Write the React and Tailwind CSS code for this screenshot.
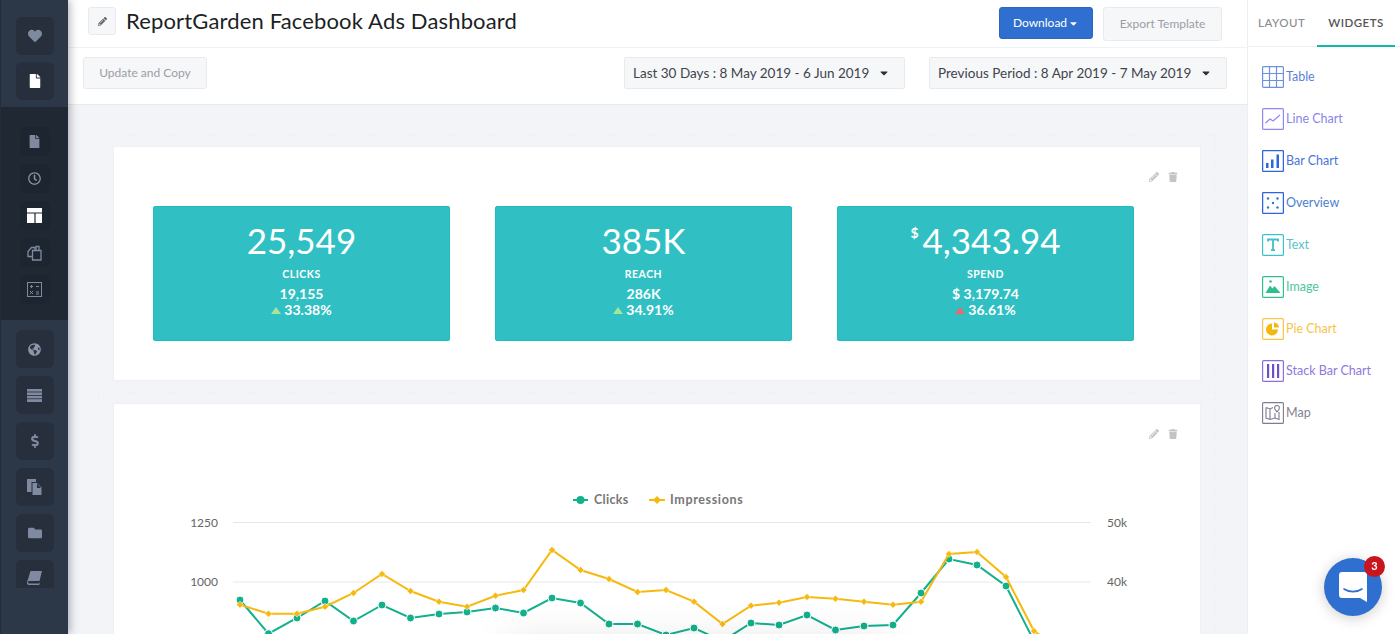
import React from 'react';
import {
  FaHeart, FaFile, FaGlobeAmericas, FaDollarSign,
  FaFolder, FaPencilAlt, FaTrash, FaCaretDown, FaRegClock,
} from 'react-icons/fa';

const FileStack = () => (
  <svg width="15" height="16" viewBox="0 0 15 16" fill="#7f8aa0">
    <path d="M0 0h9v3H4.5v10H0z" />
    <path d="M5.5 4H10l4.5 4.5V16h-9z" />
    <path d="M10 4.6V9h4z" fill="#262f3b" />
  </svg>
);

const ListIcon = () => (
  <svg width="15" height="13" viewBox="0 0 15 13" fill="#7f8aa0">
    <rect width="15" height="2.6" />
    <rect y="3.4" width="15" height="2.6" />
    <rect y="6.8" width="15" height="2.6" />
    <rect y="10.2" width="15" height="2.8" />
  </svg>
);

const BookIcon = () => (
  <svg width="15" height="14" viewBox="0 0 15 14" fill="#7f8aa0">
    <path d="M3.5 0H15l-2.5 10H2.2a1.2 1.2 0 0 0 0 2.4H12l.4-1 .5.4-.7 2.2H2A2 2 0 0 1 .1 11.2z" />
  </svg>
);

const CopyIcon = () => (
  <svg width="15" height="16" viewBox="0 0 15 16" fill="none" stroke="#7f8aa0" strokeWidth="1.3">
    <path d="M5.5 11.5H1V6.5L4.5 2.5h3.5v3" />
    <path d="M5.5 5.5h4l4.500 0v9.500H5.500z" />
    <path d="M9 5.500V1.500h3v4" />
  </svg>
);

const CalcIcon = () => (
  <svg width="15" height="15" viewBox="0 0 15 15" fill="none" stroke="#7f8aa0">
    <rect x="0.5" y="0.5" width="14" height="14" />
    <path d="M3 4.500h3M4.500 3v3M9 4.500h3M3 9l3 3M6 9l-3 3M9 10h3M9 12h3" />
  </svg>
);

const LayoutIcon = () => (
  <svg width="15" height="15" viewBox="0 0 15 15">
    <rect width="15" height="15" fill="#fff" />
    <path d="M0 5h15M8 5v10" stroke="#1f2833" strokeWidth="1.2" />
  </svg>
);

const SideButton = ({ children, small, className = '' }) => (
  <div className={`flex items-center justify-center rounded-md ${small ? 'w-[30px] h-[29px] bg-[#1c2530]' : 'w-[38px] h-[38px] bg-[#262f3b]'} ${className}`}>
    {children}
  </div>
);

const Sidebar = () => (
  <aside className="w-[68px] h-full shrink-0 flex flex-col bg-[#2c3747] border-l border-[#232c38] shadow-[2px_0_8px_rgba(30,40,55,0.35)] z-10">
    <div className="h-[107px] pt-[17px] flex flex-col items-center gap-[7px] shrink-0">
      <SideButton><FaHeart size={14} color="#7f8aa0" /></SideButton>
      <SideButton><FaFile size={14} color="#fff" /></SideButton>
    </div>
    <div className="h-[213px] pt-[20px] flex flex-col items-center gap-[8px] shrink-0 bg-[#1f2833]">
      <SideButton small><FaFile size={13} color="#7f8aa0" /></SideButton>
      <SideButton small><FaRegClock size={13} color="#8d97aa" /></SideButton>
      <SideButton small><LayoutIcon /></SideButton>
      <SideButton small><CopyIcon /></SideButton>
      <SideButton small><CalcIcon /></SideButton>
    </div>
    <div className="pt-[10px] flex flex-col items-center gap-[8px]">
      <SideButton><FaGlobeAmericas size={13} color="#8d97aa" /></SideButton>
      <SideButton><ListIcon /></SideButton>
      <SideButton><FaDollarSign size={14} color="#7f8aa0" /></SideButton>
      <SideButton><FileStack /></SideButton>
      <SideButton><FaFolder size={14} color="#7f8aa0" /></SideButton>
      <SideButton className="!h-[28px] rounded-b-none pt-[8px]"><BookIcon /></SideButton>
    </div>
  </aside>
);

const GhostButton = ({ children, className = '' }) => (
  <div className={`flex items-center justify-center rounded-[3px] bg-[#f6f7f9] border border-[#e9eaee] text-[12px] text-[#9a9ea6] ${className}`}>
    {children}
  </div>
);

const DateSelect = ({ label, className = '' }) => (
  <div className={`flex items-center justify-between h-[32px] rounded-[2px] bg-[#f6f7f9] border border-[#e9eaee] pl-[8px] pr-[14px] text-[13.5px] text-[#3f444c] ${className}`}>
    <span>{label}</span>
    <FaCaretDown size={12} color="#2b2f36" />
  </div>
);

const Header = () => (
  <div className="shrink-0 bg-white">
    <div className="h-[48px] flex items-start pl-[20px] pr-[25px] pt-[7px] border-b border-[#f1f2f5]">
      <GhostButton className="w-[28px] h-[28px]"><FaPencilAlt size={9} color="#666" /></GhostButton>
      <h1 className="ml-[10px] text-[22px] leading-[28px] tracking-[0.15px] text-[#1c1f24] font-normal">ReportGarden Facebook Ads Dashboard</h1>
      <div className="ml-auto flex gap-[10px]">
        <div className="w-[94px] h-[32px] flex items-center justify-center gap-[1px] rounded-[3px] bg-[#2f6fcf] border border-[#2a66c2] text-[12px] text-white">
          Download <FaCaretDown size={11} />
        </div>
        <GhostButton className="w-[119px] h-[34px]">Export Template</GhostButton>
      </div>
    </div>
    <div className="h-[57px] flex items-start pl-[15px] pr-[20px] pt-[9px] border-b border-[#e8e9ee]">
      <GhostButton className="w-[124px] h-[32px]">Update and Copy</GhostButton>
      <DateSelect label="Last 30 Days : 8 May 2019 - 6 Jun 2019" className="ml-auto w-[281px]" />
      <DateSelect label="Previous Period : 8 Apr 2019 - 7 May 2019" className="ml-[24px] w-[298px]" />
    </div>
  </div>
);

const metrics = [
  { value: '25,549', label: 'CLICKS', prev: '19,155', change: '33.38%', up: true },
  { value: '385K', label: 'REACH', prev: '286K', change: '34.91%', up: true },
  { value: '4,343.94', unit: '$', label: 'SPEND', prev: '$ 3,179.74', change: '36.61%', up: false },
];

const MetricCard = ({ value, unit, label, prev, change, up }) => (
  <div className="w-[297px] h-[135px] rounded-[2px] bg-[#30c0c4] border border-[#20bcc0] flex flex-col items-center text-white pt-[12px]">
    <div className="flex items-start leading-[42px] text-[35px]">
      {unit && <span className="text-[14px] font-bold leading-[28px] mr-[4px]">{unit}</span>}
      {value}
    </div>
    <div className="mt-[6px] text-[10.5px] leading-[14px] font-bold tracking-[0.5px]">{label}</div>
    <div className="mt-[5px] text-[14px] leading-[16px] font-bold">{prev}</div>
    <div className="flex items-center gap-[3px] text-[14px] leading-[16px] font-bold">
      <span className={`w-0 h-0 border-l-[5px] border-r-[5px] border-b-[7px] border-l-transparent border-r-transparent ${up ? 'border-b-[#a5e59b]' : 'border-b-[#ec6a6e]'}`} />
      {change}
    </div>
  </div>
);

const CardActions = () => (
  <div className="absolute top-[25px] right-[22px] flex items-center gap-[9px] text-[#c4c4c4]">
    <FaPencilAlt size={10} />
    <FaTrash size={10} />
  </div>
);

const xs = [239, 267.5, 296, 324, 352.5, 381, 409.5, 438, 466, 494.5, 522.5, 551, 579.5, 608, 636.5, 665, 693, 721.5, 750, 778, 806, 834.5, 863, 892, 920, 948, 976, 1005, 1033, 1062];
const clicks = [599, 632.7, 617, 600, 620, 604, 617, 613, 611, 607, 612, 597, 602, 623, 623, 634, 627, 640, 622, 624, 614, 629, 625, 624, 592, 558, 564, 585, 640, 660];
const impressions = [603.7, 612.7, 612.7, 605.7, 592, 573, 590, 600.7, 605.7, 594.7, 589, 549, 569, 578, 591, 589, 600.7, 623, 604.7, 601.7, 596, 597.7, 600.7, 603.7, 600.7, 553, 551, 576, 630, 650];

const toPoints = (ys) => ys.map((y, i) => `${xs[i]},${y}`).join(' ');

const Chart = () => (
  <svg viewBox="113 403 1087 231" className="block w-[1087px] h-[231px]">
    <g fontFamily="Lato, sans-serif" fontSize="12" fill="#666">
      <text x="217" y="526" textAnchor="end">1250</text>
      <text x="217" y="585" textAnchor="end">1000</text>
      <text x="1106" y="526">50k</text>
      <text x="1106" y="585">40k</text>
    </g>
    <path d="M232 521.5H1090" stroke="#e6e6e6" />
    <path d="M232 581H1090" stroke="#f0f0f0" strokeWidth="1.5" />
    <polyline points={toPoints(clicks)} fill="none" stroke="#12b08d" strokeWidth="2" />
    {clicks.map((y, i) => (
      <circle key={i} cx={xs[i]} cy={y} r="4" fill="#12b08d" stroke="#fff" strokeWidth="1" />
    ))}
    <polyline points={toPoints(impressions)} fill="none" stroke="#f5b90f" strokeWidth="2" />
    {impressions.map((y, i) => (
      <path key={i} d={`M${xs[i]} ${y - 3.5}l3.5 3.5l-3.5 3.5l-3.500 -3.500z`} fill="#f5b90f" stroke="#fff" strokeWidth="0.5" />
    ))}
    <path d="M572 499H587" stroke="#12b08d" strokeWidth="2" />
    <circle cx="579.500" cy="499" r="4" fill="#12b08d" />
    <text x="593" y="503" fontFamily="Lato, sans-serif" fontSize="12.5" fontWeight="700" letterSpacing="0.3" fill="#777">Clicks</text>
    <path d="M648 499H664" stroke="#f5b90f" strokeWidth="2" />
    <path d="M656 495l4 4l-4 4l-4 -4z" fill="#f5b90f" />
    <text x="669" y="503" fontFamily="Lato, sans-serif" fontSize="12.5" fontWeight="700" letterSpacing="0.65" fill="#777">Impressions</text>
  </svg>
);

const Canvas = () => (
  <div className="flex-1 min-h-0 overflow-hidden bg-[#f3f4f8] pt-[30px] pl-[30px] relative">
    <div className="w-[1118px] h-[256px] border border-dashed border-[#f0f1f5] px-[14px] py-[10px]">
      <div className="relative h-[235px] bg-white border border-[#eef0f3] pt-[59px] pl-[39px] flex gap-[45px]">
        <CardActions />
        {metrics.map((m) => <MetricCard key={m.label} {...m} />)}
      </div>
    </div>
    <div className="w-[1118px] mt-px border border-dashed border-[#f0f1f5] px-[14px] pt-[10px]">
      <div className="relative bg-white border border-[#eef0f3]">
        <CardActions />
        <Chart />
      </div>
    </div>
    {/* soft shadow of something just below the fold */}
    <div className="absolute left-[440px] top-[545px] w-[380px] h-[40px] rounded-full shadow-[0_0_40px_10px_rgba(0,0,0,0.11)]" />
  </div>
);

const TableIcon = () => (
  <svg width="22" height="22" viewBox="0 0 22 22" fill="none" stroke="#6f8fe0" strokeWidth="1.2">
    <rect x="0.6" y="0.6" width="20.8" height="20.8" rx="1" />
    <path d="M7.500 1v20M14.500 1v20M1 7.500h20M1 14.500h20" />
  </svg>
);
const LineIcon = () => (
  <svg width="22" height="22" viewBox="0 0 22 22" fill="none" stroke="#8f88ee" strokeWidth="1.2">
    <rect x="0.6" y="0.6" width="20.8" height="20.8" rx="1" />
    <path d="M3.500 15 8 11l3 2 7-6" />
  </svg>
);
const BarIcon = () => (
  <svg width="22" height="22" viewBox="0 0 22 22" fill="none" stroke="#2f66e0" strokeWidth="1.3">
    <rect x="0.6" y="0.6" width="20.8" height="20.8" rx="1" />
    <path d="M4 13h2.500v5H4zM9 9.500h2.500V18H9zM14.500 4.500H17V18h-2.500z" fill="#2f66e0" stroke="none" />
  </svg>
);
const OverviewIcon = () => (
  <svg width="22" height="22" viewBox="0 0 22 22" fill="none" stroke="#2f66e0" strokeWidth="1.3">
    <rect x="0.6" y="0.6" width="20.8" height="20.8" rx="1" />
    <g fill="#2f7ac8" stroke="none">
      <circle cx="6" cy="6.500" r="1.2" /><circle cx="15.500" cy="6.500" r="1.2" /><circle cx="11" cy="11" r="1.2" />
      <circle cx="6" cy="15.500" r="1.2" /><circle cx="15.500" cy="15.500" r="1.2" />
    </g>
  </svg>
);
const TextIcon = () => (
  <svg width="22" height="22" viewBox="0 0 22 22" fill="none" stroke="#3ec1c9" strokeWidth="1.2">
    <rect x="0.6" y="0.6" width="20.8" height="20.8" rx="1" />
    <path d="M6 7.500V5.500h10v2M11 5.500V16M9 16.200h4" strokeWidth="1.8" />
  </svg>
);
const ImageIcon = () => (
  <svg width="22" height="22" viewBox="0 0 22 22" fill="none" stroke="#2fc08e" strokeWidth="1.2">
    <rect x="0.6" y="0.6" width="20.8" height="20.8" rx="1" />
    <path d="M3.500 17 8 9.500l2.500 3 2-2.500 6 7z" fill="#2fc08e" stroke="none" />
    <circle cx="8.500" cy="5.500" r="1.3" fill="#2fc08e" stroke="none" />
  </svg>
);
const PieIcon = () => (
  <svg width="22" height="22" viewBox="0 0 22 22" fill="none" stroke="#f8c646" strokeWidth="1.2">
    <rect x="0.6" y="0.6" width="20.8" height="20.8" rx="1" />
    <path d="M10 5.500v6h6a6 6 0 1 1-6-6z" fill="#f2b90d" stroke="none" />
    <path d="M12 4.500a5.600 5.600 0 0 1 5 5h-5z" fill="#f2b90d" stroke="none" />
  </svg>
);
const StackIcon = () => (
  <svg width="22" height="22" viewBox="0 0 22 22" fill="none" stroke="#8c6fdc" strokeWidth="1.2">
    <rect x="0.6" y="0.6" width="20.8" height="20.8" rx="1" />
    <path d="M5 4h2.200v14H5zM10 4h2.200v14H10zM15 4h2.200v14H15z" fill="#6d4fc8" stroke="none" />
  </svg>
);
const MapIcon = () => (
  <svg width="22" height="22" viewBox="0 0 22 22" fill="none" stroke="#7c7c92" strokeWidth="1.1">
    <rect x="0.6" y="0.6" width="20.8" height="20.8" rx="1" />
    <path d="M4 5.500 8 7l3-1.500M4 5.500V16l4 1.500 5-1.500 4 1.500V10M8 7v10.500M13 11v5" />
    <path d="M15 3.500a2.400 2.400 0 0 1 2.400 2.400c0 1.600-2.400 4-2.400 4s-2.400-2.400-2.400-4A2.400 2.400 0 0 1 15 3.500z" />
  </svg>
);

const widgets = [
  { label: 'Table', Icon: TableIcon, color: 'text-[#5c80d8]' },
  { label: 'Line Chart', Icon: LineIcon, color: 'text-[#8a84ea]' },
  { label: 'Bar Chart', Icon: BarIcon, color: 'text-[#4a74dc]' },
  { label: 'Overview', Icon: OverviewIcon, color: 'text-[#4a80d0]' },
  { label: 'Text', Icon: TextIcon, color: 'text-[#55c4cc]' },
  { label: 'Image', Icon: ImageIcon, color: 'text-[#4cc79d]' },
  { label: 'Pie Chart', Icon: PieIcon, color: 'text-[#f7c44a]' },
  { label: 'Stack Bar Chart', Icon: StackIcon, color: 'text-[#8f78dc]' },
  { label: 'Map', Icon: MapIcon, color: 'text-[#83838f]' },
];

const RightPanel = () => (
  <aside className="w-[153px] h-full shrink-0 bg-white border-l border-[#eceef2] relative">
    <div className="h-[47px] flex items-start border-b border-[#eceef0] text-[11.5px] tracking-[0.5px] font-medium">
      <div className="pl-[10px] w-[69px] pt-[14px] text-[#8b8b8b]">LAYOUT</div>
      <div className="w-[78px] h-[47px] pt-[14px] text-center text-[#555] font-semibold border-b-2 border-[#12b8a6]">WIDGETS</div>
    </div>
    <ul className="pt-[19px] pl-[14px] flex flex-col gap-[20px]">
      {widgets.map(({ label, Icon, color }) => (
        <li key={label} className={`flex items-center gap-[2px] h-[22px] text-[12.5px] ${color}`}>
          <Icon />
          <span>{label}</span>
        </li>
      ))}
    </ul>
  </aside>
);

const ChatBubble = () => (
  <div className="fixed left-[1324px] top-[558px] w-[58px] h-[58px] rounded-full bg-[#2f6fcf] shadow-[0_2px_14px_rgba(0,0,0,0.2)] flex items-center justify-center">
    <svg width="28" height="30" viewBox="0 0 28 30">
      <path d="M3 0h22a3 3 0 0 1 3 3v27l-7-4H3a3 3 0 0 1-3-3V3a3 3 0 0 1 3-3z" fill="#fff" />
      <path d="M5 17c5 3.500 13 3.500 18 0" fill="none" stroke="#2f6fcf" strokeWidth="1.6" strokeLinecap="round" />
    </svg>
    <span className="absolute -top-[2px] right-[-3px] w-[21px] h-[21px] rounded-full bg-[#c9161d] text-white text-[11px] font-bold flex items-center justify-center">3</span>
  </div>
);

export default function App() {
  return (
    <div className="w-[1400px] h-[634px] overflow-hidden flex font-['Lato',sans-serif]">
      <Sidebar />
      <main className="flex-1 min-w-0 h-full flex flex-col">
        <Header />
        <Canvas />
      </main>
      <RightPanel />
      <ChatBubble />
    </div>
  );
}
